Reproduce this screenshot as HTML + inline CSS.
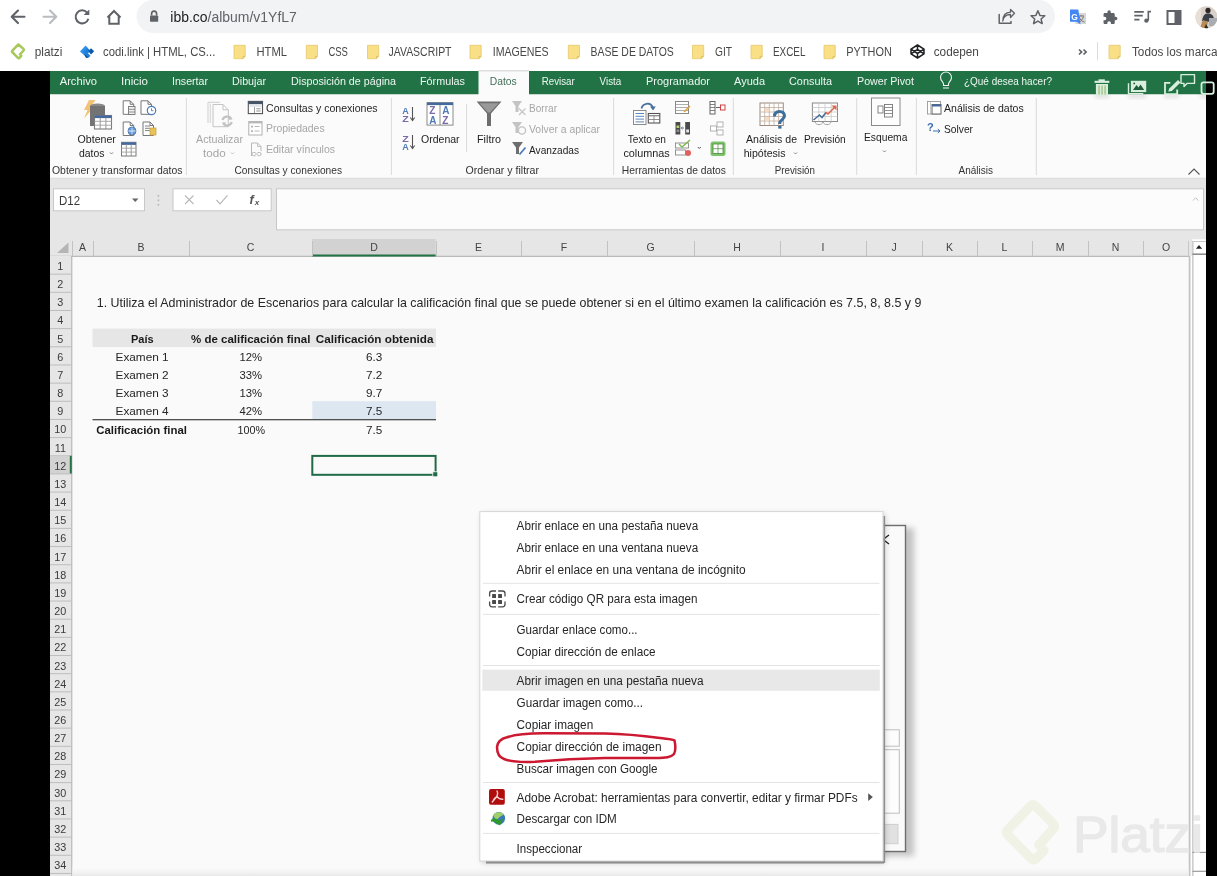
<!DOCTYPE html>
<html><head><meta charset="utf-8"><title>ibb</title>
<style>html,body{margin:0;padding:0;width:1217px;height:876px;overflow:hidden;background:#fff}
svg{display:block;will-change:transform} text{font-family:"Liberation Sans",sans-serif;white-space:pre}</style></head>
<body><svg width="1217" height="876" viewBox="0 0 1217 876">
<rect x="0" y="0" width="1217" height="36" fill="#ffffff" />
<rect x="136.5" y="0" width="918.5" height="33" fill="#f1f3f4" rx="16.5" />
<path d="M24.5 16.8 H12.5 M18 10.5 L11.7 16.8 L18 23.1" fill="none" stroke="#5f6368" stroke-width="2.1" stroke-linecap="round" stroke-linejoin="round"/>
<path d="M43.5 16.8 H55.5 M50 10.5 L56.3 16.8 L50 23.1" fill="none" stroke="#b9bcc0" stroke-width="2.1" stroke-linecap="round" stroke-linejoin="round"/>
<path d="M87.1 12.6 A6.5 6.5 0 1 0 88.4 18.7" fill="none" stroke="#5f6368" stroke-width="2" stroke-linecap="butt"/>
<path d="M89.3 9.4 L89.3 15 L83.6 15 Z" fill="#5f6368" />
<path d="M107.5 17.5 L114 11 L120.5 17.5 M109.3 16 V23.8 H118.7 V16" fill="none" stroke="#5f6368" stroke-width="2" stroke-linejoin="miter"/>
<path d="M151.6 15.5 V13.8 A2.5 2.7 0 0 1 156.6 13.8 V15.5" fill="none" stroke="#5f6368" stroke-width="1.6" />
<rect x="150" y="15.5" width="8.2" height="6.3" fill="#5f6368" rx="0.8" />
<text x="170.3" y="21.7" font-size="14" textLength="126.5" lengthAdjust="spacingAndGlyphs"><tspan fill="#202124">ibb.co</tspan><tspan fill="#5f6368">/album/v1YfL7</tspan></text>
<path d="M999.2 14.5 V23.3 H1011 V21.5" fill="none" stroke="#5f6368" stroke-width="1.5" stroke-linejoin="round" stroke-linecap="round"/>
<path d="M1002.8 21 C1003.5 16.5 1006.5 14.5 1010.5 14.5 V17.5 L1014.5 13.3 L1010.5 9.5 V12.2 C1005.5 12.5 1002.8 16 1002.8 21 Z" fill="none" stroke="#5f6368" stroke-width="1.3" stroke-linejoin="round"/>
<path d="M1037.9 10.8 L1039.9 15.4 L1044.8 15.8 L1041.1 19 L1042.2 23.6 L1037.9 21.1 L1033.6 23.6 L1034.7 19 L1031 15.8 L1035.9 15.4 Z" fill="none" stroke="#5f6368" stroke-width="1.5" stroke-linejoin="round"/>
<rect x="1075.5" y="13" width="10.5" height="11" fill="#d6d6d6" />
<path d="M1078 16 H1084 M1081 15 V16 M1079 16.5 C1080 20 1082 21.5 1084.5 22 M1083.5 16.5 C1082.5 19.5 1081 21.5 1078.5 22.5" fill="none" stroke="#6b6b6b" stroke-width="0.9" />
<path d="M1070 9.5 H1078.3 L1080.5 24.5 L1077 21.8 H1070 Z" fill="#4285f4" />
<text x="1071.3" y="19.5" font-size="8.5" fill="#ffffff" font-weight="700" >G</text>
<path d="M20.5 11H19V7c0-1.1-.9-2-2-2h-4V3.5C13 2.12 11.88 1 10.5 1S8 2.12 8 3.5V5H4c-1.1 0-1.99.9-1.99 2v3.8H3.5c1.49 0 2.7 1.21 2.7 2.7s-1.21 2.7-2.7 2.7H2V20c0 1.1.9 2 2 2h3.8v-1.5c0-1.49 1.21-2.7 2.7-2.7 1.49 0 2.7 1.21 2.7 2.7V22H17c1.1 0 2-.9 2-2v-4h1.5c1.38 0 2.5-1.12 2.5-2.5S21.88 11 20.5 11z" fill="#5f6368" transform="translate(1102.2,9.6) scale(0.66)"/>
<path d="M1134.3 11.8 H1143.8 M1134.3 15.6 H1142.8 M1134.3 19.6 H1139.5" fill="none" stroke="#5f6368" stroke-width="1.7" />
<path d="M1148.3 20.5 V11.6 H1151" fill="none" stroke="#5f6368" stroke-width="1.6" />
<ellipse cx="1146.4" cy="20.7" rx="2.2" ry="2.1" fill="#5f6368"/>
<rect x="1167.5" y="11" width="13" height="13" fill="none" stroke="#5f6368" stroke-width="2" />
<rect x="1174.5" y="11" width="6" height="13" fill="#5f6368" />
<clipPath id="av"><circle cx="1206.5" cy="17.2" r="11"/></clipPath>
<g clip-path="url(#av)"><rect x="1195" y="6" width="22" height="23" fill="#d8d2ca"/><rect x="1195" y="6" width="6" height="23" fill="#e8e0d6"/><ellipse cx="1208" cy="10.5" rx="2.6" ry="2.8" fill="#2e2622"/><path d="M1202 21 C1203 15 1205 13.5 1208 13.5 C1211 13.5 1213.5 15 1214 19 L1211 22 Z" fill="#3a3f46"/><path d="M1200 28 L1203 20 L1208 22 L1206 29 Z" fill="#b98a55"/><path d="M1209 18 H1217 V26 H1209 Z" fill="#a9adb2"/><path d="M1206 24 L1209 29 H1204 Z" fill="#2a2a2a"/></g>
<rect x="0" y="36" width="1217" height="35" fill="#ffffff" />
<path d="M20 54.3 L23.6 50.5 Q24.2 49.8 23.6 49.2 L19 44.8 Q18.4 44.2 17.8 44.8 L12.2 50.8 Q11.6 51.4 12.2 52 L18 58 Q18.6 58.6 19.2 58 L21.3 55.9" fill="none" stroke="#a6c95a" stroke-width="2.5" stroke-linejoin="round" stroke-linecap="round"/>
<text x="34.8" y="55.6" font-size="12" fill="#474747" textLength="27.5" lengthAdjust="spacingAndGlyphs" >platzi</text>
<path d="M85.5 45.8 L90.5 50.8 L88 53.3 L90.5 55.8 L88.8 57.5 L80.2 51.5 Z" fill="#1f80dc" />
<path d="M80.2 51.5 L85.5 45.8 L87.5 47.8 L83 51.8 L88.8 57.5 L86.5 57.5 Z" fill="#2f93ea" />
<path d="M91 48.2 L94.2 51.3 L91 54.4 L88.3 51.3 Z" fill="#0f5aa8" />
<path d="M84 53.5 L88.8 57.5 L86 58 Z" fill="#0d4f94" />
<text x="103" y="55.6" font-size="12" fill="#474747" textLength="112.3" lengthAdjust="spacingAndGlyphs" >codi.link | HTML, CS...</text>
<path d="M234 45.3 H245.2 V56.3 L243 58.7 H234 Z" fill="#f9df86" stroke="#e6c869" stroke-width="0.8" />
<path d="M245.2 56.3 H243 V58.7" fill="#e9cf77" stroke="#d9b95a" stroke-width="0.6" />
<text x="256.5" y="55.6" font-size="12" fill="#474747" textLength="30.5" lengthAdjust="spacingAndGlyphs" >HTML</text>
<path d="M306.3 45.3 H317.5 V56.3 L315.3 58.7 H306.3 Z" fill="#f9df86" stroke="#e6c869" stroke-width="0.8" />
<path d="M317.5 56.3 H315.3 V58.7" fill="#e9cf77" stroke="#d9b95a" stroke-width="0.6" />
<text x="328.4" y="55.6" font-size="12" fill="#474747" textLength="19.5" lengthAdjust="spacingAndGlyphs" >CSS</text>
<path d="M367.5 45.3 H378.7 V56.3 L376.5 58.7 H367.5 Z" fill="#f9df86" stroke="#e6c869" stroke-width="0.8" />
<path d="M378.7 56.3 H376.5 V58.7" fill="#e9cf77" stroke="#d9b95a" stroke-width="0.6" />
<text x="388.5" y="55.6" font-size="12" fill="#474747" textLength="63" lengthAdjust="spacingAndGlyphs" >JAVASCRIPT</text>
<path d="M470 45.3 H481.2 V56.3 L479 58.7 H470 Z" fill="#f9df86" stroke="#e6c869" stroke-width="0.8" />
<path d="M481.2 56.3 H479 V58.7" fill="#e9cf77" stroke="#d9b95a" stroke-width="0.6" />
<text x="492.7" y="55.6" font-size="12" fill="#474747" textLength="56" lengthAdjust="spacingAndGlyphs" >IMAGENES</text>
<path d="M568.3 45.3 H579.5 V56.3 L577.3 58.7 H568.3 Z" fill="#f9df86" stroke="#e6c869" stroke-width="0.8" />
<path d="M579.5 56.3 H577.3 V58.7" fill="#e9cf77" stroke="#d9b95a" stroke-width="0.6" />
<text x="590.6" y="55.6" font-size="12" fill="#474747" textLength="83.2" lengthAdjust="spacingAndGlyphs" >BASE DE DATOS</text>
<path d="M692.5 45.3 H703.7 V56.3 L701.5 58.7 H692.5 Z" fill="#f9df86" stroke="#e6c869" stroke-width="0.8" />
<path d="M703.7 56.3 H701.5 V58.7" fill="#e9cf77" stroke="#d9b95a" stroke-width="0.6" />
<text x="715" y="55.6" font-size="12" fill="#474747" textLength="17" lengthAdjust="spacingAndGlyphs" >GIT</text>
<path d="M751 45.3 H762.2 V56.3 L760 58.7 H751 Z" fill="#f9df86" stroke="#e6c869" stroke-width="0.8" />
<path d="M762.2 56.3 H760 V58.7" fill="#e9cf77" stroke="#d9b95a" stroke-width="0.6" />
<text x="773" y="55.6" font-size="12" fill="#474747" textLength="32.5" lengthAdjust="spacingAndGlyphs" >EXCEL</text>
<path d="M824 45.3 H835.2 V56.3 L833 58.7 H824 Z" fill="#f9df86" stroke="#e6c869" stroke-width="0.8" />
<path d="M835.2 56.3 H833 V58.7" fill="#e9cf77" stroke="#d9b95a" stroke-width="0.6" />
<text x="846.3" y="55.6" font-size="12" fill="#474747" textLength="45.5" lengthAdjust="spacingAndGlyphs" >PYTHON</text>
<path d="M917.5 45 L924 49.2 V53.8 L917.5 58 L911 53.8 V49.2 Z M911 49.2 L917.5 53.5 L924 49.2 M911 53.8 L917.5 49.5 L924 53.8 M917.5 45 V49.5 M917.5 53.5 V58" fill="none" stroke="#202124" stroke-width="1.5" stroke-linejoin="round"/>
<text x="933.7" y="55.6" font-size="12" fill="#474747" textLength="45.2" lengthAdjust="spacingAndGlyphs" >codepen</text>
<path d="M1079 49.5 L1081.6 52 L1079 54.5 M1083.5 49.5 L1086.1 52 L1083.5 54.5" fill="none" stroke="#5f6368" stroke-width="1.7" />
<line x1="1097.5" y1="42.3" x2="1097.5" y2="60.3" stroke="#dadce0" stroke-width="1" />
<path d="M1109 45.3 H1120.2 V56.3 L1118 58.7 H1109 Z" fill="#f9df86" stroke="#e6c869" stroke-width="0.8" />
<path d="M1120.2 56.3 H1118 V58.7" fill="#e9cf77" stroke="#d9b95a" stroke-width="0.6" />
<text x="1132" y="55.6" font-size="12" fill="#474747" textLength="85.5" lengthAdjust="spacingAndGlyphs" >Todos los marca</text>
<rect x="0" y="71" width="50" height="805" fill="#000000" />
<rect x="1206" y="71" width="11" height="805" fill="#000000" />
<rect x="50" y="71" width="1156" height="23.5" fill="#217346" />
<rect x="50" y="94.5" width="1156" height="84" fill="#fbfbfb" />
<rect x="478.5" y="71" width="50.5" height="24" fill="#fbfbfb" />
<line x1="50" y1="178.3" x2="1206" y2="178.3" stroke="#d6d6d6" stroke-width="1" />
<text x="59.7" y="84.8" font-size="11.5" fill="#eef7f1" textLength="37.3" lengthAdjust="spacingAndGlyphs" >Archivo</text>
<text x="121" y="84.8" font-size="11.5" fill="#eef7f1" textLength="27" lengthAdjust="spacingAndGlyphs" >Inicio</text>
<text x="172" y="84.8" font-size="11.5" fill="#eef7f1" textLength="36" lengthAdjust="spacingAndGlyphs" >Insertar</text>
<text x="232" y="84.8" font-size="11.5" fill="#eef7f1" textLength="34" lengthAdjust="spacingAndGlyphs" >Dibujar</text>
<text x="291" y="84.8" font-size="11.5" fill="#eef7f1" textLength="105" lengthAdjust="spacingAndGlyphs" >Disposición de página</text>
<text x="420" y="84.8" font-size="11.5" fill="#eef7f1" textLength="45" lengthAdjust="spacingAndGlyphs" >Fórmulas</text>
<text x="541.7" y="84.8" font-size="11.5" fill="#eef7f1" textLength="33" lengthAdjust="spacingAndGlyphs" >Revisar</text>
<text x="599.6" y="84.8" font-size="11.5" fill="#eef7f1" textLength="21.7" lengthAdjust="spacingAndGlyphs" >Vista</text>
<text x="646" y="84.8" font-size="11.5" fill="#eef7f1" textLength="64" lengthAdjust="spacingAndGlyphs" >Programador</text>
<text x="734" y="84.8" font-size="11.5" fill="#eef7f1" textLength="31" lengthAdjust="spacingAndGlyphs" >Ayuda</text>
<text x="789" y="84.8" font-size="11.5" fill="#eef7f1" textLength="43" lengthAdjust="spacingAndGlyphs" >Consulta</text>
<text x="857" y="84.8" font-size="11.5" fill="#eef7f1" textLength="57" lengthAdjust="spacingAndGlyphs" >Power Pivot</text>
<text x="964" y="84.8" font-size="11.5" fill="#eef7f1" textLength="88" lengthAdjust="spacingAndGlyphs" >¿Qué desea hacer?</text>
<text x="489.7" y="84.8" font-size="11.5" fill="#44705a" textLength="27" lengthAdjust="spacingAndGlyphs" >Datos</text>
<line x1="478.5" y1="70.8" x2="528.8" y2="70.8" stroke="#cfcfcf" stroke-width="1" />
<path d="M943 88 H949 M943.5 85.5 V84 C943.5 82 940.5 81 940.5 77.5 A5.5 5.5 0 0 1 951.5 77.5 C951.5 81 948.5 82 948.5 84 V85.5 Z" fill="none" stroke="#eef7f1" stroke-width="1.1" />
<line x1="186.4" y1="98" x2="186.4" y2="175" stroke="#dadada" stroke-width="1" />
<line x1="391.4" y1="98" x2="391.4" y2="175" stroke="#dadada" stroke-width="1" />
<line x1="466.6" y1="104" x2="466.6" y2="152" stroke="#dadada" stroke-width="1" />
<line x1="613.6" y1="98" x2="613.6" y2="175" stroke="#dadada" stroke-width="1" />
<line x1="733.3" y1="98" x2="733.3" y2="175" stroke="#dadada" stroke-width="1" />
<line x1="856.7" y1="98" x2="856.7" y2="175" stroke="#dadada" stroke-width="1" />
<line x1="916.4" y1="98" x2="916.4" y2="175" stroke="#dadada" stroke-width="1" />
<line x1="1036.3" y1="98" x2="1036.3" y2="175" stroke="#dadada" stroke-width="1" />
<text x="52" y="174.1" font-size="10.2" fill="#333333" textLength="130.5" lengthAdjust="spacingAndGlyphs" >Obtener y transformar datos</text>
<text x="234.5" y="174.1" font-size="10.2" fill="#333333" textLength="107.5" lengthAdjust="spacingAndGlyphs" >Consultas y conexiones</text>
<text x="465.6" y="174.1" font-size="10.2" fill="#333333" textLength="73.4" lengthAdjust="spacingAndGlyphs" >Ordenar y filtrar</text>
<text x="621.8" y="174.1" font-size="10.2" fill="#333333" textLength="104.2" lengthAdjust="spacingAndGlyphs" >Herramientas de datos</text>
<text x="774.7" y="174.1" font-size="10.2" fill="#333333" textLength="40.3" lengthAdjust="spacingAndGlyphs" >Previsión</text>
<text x="958.6" y="174.1" font-size="10.2" fill="#333333" textLength="34.4" lengthAdjust="spacingAndGlyphs" >Análisis</text>
<path d="M89 100 L95.5 100 L90.5 107.5 L93.5 107.5 L84 118.5 L87.5 110 L84 110 Z" fill="#f3c274" />
<ellipse cx="97.5" cy="106" rx="7.5" ry="2.6" fill="#8a8a8a"/>
<rect x="90" y="106" width="15" height="20" fill="#737373" />
<rect x="94.5" y="115.5" width="17" height="13.5" fill="#ffffff" stroke="#7a7a7a" stroke-width="1.1" />
<rect x="94.5" y="115.5" width="17" height="2.6" fill="#44699f" />
<line x1="100.2" y1="117.5" x2="100.2" y2="129" stroke="#8c8c8c" stroke-width="0.9" />
<line x1="105.9" y1="117.5" x2="105.9" y2="129" stroke="#8c8c8c" stroke-width="0.9" />
<line x1="94.5" y1="121.3" x2="111.5" y2="121.3" stroke="#a0a0a0" stroke-width="0.9" />
<line x1="94.5" y1="125.2" x2="111.5" y2="125.2" stroke="#a0a0a0" stroke-width="0.9" />
<text x="77.6" y="142.75" font-size="11.5" fill="#1e1e1e" textLength="38.3" lengthAdjust="spacingAndGlyphs" >Obtener</text>
<text x="79" y="156.6" font-size="11.5" fill="#1e1e1e" textLength="25.5" lengthAdjust="spacingAndGlyphs" >datos</text>
<path d="M110 152.4 L111.5 154 L113 152.4" fill="none" stroke="#777" stroke-width="0.9" />
<path d="M123.2 100.8 H130.2 L133.7 104.3 V114.3 H123.2 Z M130.2 100.8 V104.3 H133.7" fill="#ffffff" stroke="#777" stroke-width="1" />
<rect x="128.5" y="106.5" width="6.5" height="8" fill="#f0f0f0" stroke="#777" stroke-width="0.9" />
<line x1="128.5" y1="109.3" x2="135" y2="109.3" stroke="#777" stroke-width="0.8" />
<line x1="128.5" y1="112" x2="135" y2="112" stroke="#777" stroke-width="0.8" />
<path d="M141 100.8 H148.0 L151.5 104.3 V114.3 H141 Z M148.0 100.8 V104.3 H151.5" fill="#ffffff" stroke="#777" stroke-width="1" />
<circle cx="151.5" cy="110.5" r="4.2" fill="#ffffff" stroke="#4e7ab5" stroke-width="1.2"/>
<path d="M151.5 108.3 V110.7 H153.5" fill="none" stroke="#4e7ab5" stroke-width="0.9" />
<path d="M123.2 122 H130.2 L133.7 125.5 V135.5 H123.2 Z M130.2 122 V125.5 H133.7" fill="#ffffff" stroke="#777" stroke-width="1" />
<circle cx="132" cy="131" r="4" fill="#6b9bd7" stroke="#3f6fae" stroke-width="0.8"/>
<line x1="128.5" y1="131" x2="135.5" y2="131" stroke="#fff" stroke-width="0.8" />
<line x1="132" y1="127.5" x2="132" y2="134.5" stroke="#fff" stroke-width="0.6" />
<path d="M143 122 H150.0 L153.5 125.5 V135.5 H143 Z M150.0 122 V125.5 H153.5" fill="#ffffff" stroke="#777" stroke-width="1" />
<line x1="145" y1="126" x2="150" y2="126" stroke="#777" stroke-width="0.9" />
<line x1="145" y1="128.3" x2="150" y2="128.3" stroke="#777" stroke-width="0.9" />
<line x1="145" y1="130.6" x2="150" y2="130.6" stroke="#777" stroke-width="0.9" />
<rect x="150" y="128" width="6" height="7" fill="#e8c35a" stroke="#c9a23a" stroke-width="0.7" />
<rect x="121.5" y="142.3" width="14.5" height="13.7" fill="#ffffff" stroke="#7a7a7a" stroke-width="1" />
<rect x="121.5" y="142.3" width="14.5" height="2.6" fill="#44699f" />
<line x1="126.3" y1="144" x2="126.3" y2="156" stroke="#8c8c8c" stroke-width="0.9" />
<line x1="131.2" y1="144" x2="131.2" y2="156" stroke="#8c8c8c" stroke-width="0.9" />
<line x1="121.5" y1="148.2" x2="136" y2="148.2" stroke="#a0a0a0" stroke-width="0.9" />
<line x1="121.5" y1="152.1" x2="136" y2="152.1" stroke="#a0a0a0" stroke-width="0.9" />
<path d="M208 123 V102.3 H220" fill="none" stroke="#cfcfcf" stroke-width="1" />
<path d="M210.3 123 V103.8" fill="none" stroke="#d4d4d4" stroke-width="1" />
<path d="M213 104.5 H223 L228.3 109.8 V126.7 H213 Z M223 104.5 V109.8 H228.3" fill="#fbfbfb" stroke="#c4c4c4" stroke-width="1" />
<path d="M222.5 120 A4.8 4.8 0 0 1 231 118.5 M231.8 122 A4.8 4.8 0 0 1 223.3 123.5" fill="none" stroke="#c2c2c2" stroke-width="2.2" />
<path d="M230 115.8 L232.6 119.5 L228.5 119.8 Z M224.5 126.2 L221.8 122.6 L225.9 122.2 Z" fill="#c2c2c2" />
<text x="196" y="142.7" font-size="11.5" fill="#a6a6a6" textLength="47" lengthAdjust="spacingAndGlyphs" >Actualizar</text>
<text x="203" y="156.8" font-size="11.5" fill="#a6a6a6" textLength="22.6" lengthAdjust="spacingAndGlyphs" >todo</text>
<path d="M231 152.5 L232.5 154 L234 152.5" fill="none" stroke="#bbb" stroke-width="0.9" />
<rect x="248.3" y="101.4" width="14.2" height="12.2" fill="#ffffff" stroke="#555" stroke-width="1.1" />
<rect x="248.3" y="101.4" width="14.2" height="2.8" fill="#44546a" />
<rect x="249.3" y="104.5" width="12.2" height="2.5" fill="#e4e8ee" />
<line x1="254.5" y1="107" x2="254.5" y2="113" stroke="#888" stroke-width="0.8" />
<line x1="256.3" y1="108.8" x2="260.5" y2="108.8" stroke="#777" stroke-width="0.8" />
<line x1="256.3" y1="111" x2="260.5" y2="111" stroke="#777" stroke-width="0.8" />
<text x="266" y="111.8" font-size="11.5" fill="#1e1e1e" textLength="111.6" lengthAdjust="spacingAndGlyphs" >Consultas y conexiones</text>
<rect x="248.8" y="121.6" width="13.2" height="13.4" fill="#ffffff" stroke="#b0b0b0" stroke-width="1" />
<rect x="248.8" y="121.6" width="13.2" height="1.8" fill="#b8b8b8" />
<rect x="251" y="125.7" width="2" height="1.8" fill="#b5b5b5" />
<line x1="254.5" y1="126.5" x2="259.5" y2="126.5" stroke="#b0b0b0" stroke-width="0.9" />
<rect x="251" y="130.2" width="2" height="1.8" fill="#b5b5b5" />
<line x1="254.5" y1="131" x2="259.5" y2="131" stroke="#b0b0b0" stroke-width="0.9" />
<text x="266" y="132" font-size="11.5" fill="#a6a6a6" textLength="58.6" lengthAdjust="spacingAndGlyphs" >Propiedades</text>
<path d="M251.5 156 V143 H257.5 L261 146.5 V151" fill="none" stroke="#b8b8b8" stroke-width="1" />
<path d="M257.5 143 V146.5 H261" fill="none" stroke="#b8b8b8" stroke-width="0.8" />
<path d="M255.5 152.5 H253.5 A1.6 1.6 0 0 0 253.5 155.7 H255.5 M257.5 152.5 H259.5 A1.6 1.6 0 0 1 259.5 155.7 H257.5 M255 154.1 H258" fill="none" stroke="#b0b0b0" stroke-width="0.9" />
<text x="266" y="153" font-size="11.5" fill="#a6a6a6" textLength="69" lengthAdjust="spacingAndGlyphs" >Editar vínculos</text>
<text x="402.3" y="114" font-size="8.5" fill="#4e7ab5" font-weight="700" textLength="6.5" lengthAdjust="spacingAndGlyphs" >A</text>
<text x="402.3" y="121.8" font-size="8.5" fill="#7a6ba8" font-weight="700" textLength="6.5" lengthAdjust="spacingAndGlyphs" >Z</text>
<path d="M412.5 107 V120 M410.3 117.5 L412.5 120.5 L414.7 117.5" fill="none" stroke="#555" stroke-width="1.1" />
<text x="402.3" y="141.8" font-size="8.5" fill="#7a6ba8" font-weight="700" textLength="6.5" lengthAdjust="spacingAndGlyphs" >Z</text>
<text x="402.3" y="149.8" font-size="8.5" fill="#4e7ab5" font-weight="700" textLength="6.5" lengthAdjust="spacingAndGlyphs" >A</text>
<path d="M412.5 135 V148 M410.3 145.5 L412.5 148.5 L414.7 145.5" fill="none" stroke="#555" stroke-width="1.1" />
<rect x="427" y="102.6" width="26" height="22.5" fill="#ffffff" stroke="#8a8a8a" stroke-width="1" />
<rect x="427" y="102.6" width="26" height="2.5" fill="#44699f" />
<line x1="440" y1="105" x2="440" y2="125" stroke="#8a8a8a" stroke-width="1" />
<text x="429.3" y="114" font-size="10" fill="#7a6ba8" font-weight="700" >Z</text>
<text x="442.3" y="114" font-size="10" fill="#4e7ab5" font-weight="700" >A</text>
<text x="429.3" y="124.3" font-size="10" fill="#4e7ab5" font-weight="700" >A</text>
<text x="442.3" y="124.3" font-size="10" fill="#7a6ba8" font-weight="700" >Z</text>
<text x="421" y="142.6" font-size="11.5" fill="#1e1e1e" textLength="38.6" lengthAdjust="spacingAndGlyphs" >Ordenar</text>
<path d="M476.6 101.6 H501.5 L491 113.5 V126 H487 V113.5 Z" fill="#6e6e6e" />
<path d="M479.5 103.3 H498.6 L490 112.5 H488 Z" fill="#9a9a9a" />
<text x="477" y="142.6" font-size="11.5" fill="#1e1e1e" textLength="24" lengthAdjust="spacingAndGlyphs" >Filtro</text>
<path d="M512 101 H522 L518.5 106 V112 H515.5 V106 Z" fill="#c4c4c4" />
<path d="M519 108.5 L525.5 115 M525.5 108.5 L519 115" fill="none" stroke="#c4c4c4" stroke-width="1.2" />
<text x="529" y="112" font-size="11.5" fill="#a6a6a6" textLength="28" lengthAdjust="spacingAndGlyphs" >Borrar</text>
<path d="M512 122 H522 L518.5 127 V133 H515.5 V127 Z" fill="#c4c4c4" />
<circle cx="522" cy="130.5" r="3.6" fill="none" stroke="#c4c4c4" stroke-width="1.4"/>
<text x="529" y="132.8" font-size="11.5" fill="#a6a6a6" textLength="71" lengthAdjust="spacingAndGlyphs" >Volver a aplicar</text>
<path d="M512 142 H523 L519 147.5 V154 H516 V147.5 Z" fill="#6e6e6e" />
<path d="M519.5 154.5 L525.5 147.5" fill="none" stroke="#4e7ab5" stroke-width="1.8" />
<text x="529" y="153.6" font-size="11.5" fill="#1e1e1e" textLength="50" lengthAdjust="spacingAndGlyphs" >Avanzadas</text>
<path d="M641.5 108.5 C642.5 103.5 650 101.5 652.8 107" fill="none" stroke="#4a6f9c" stroke-width="1.7" />
<path d="M650 106.5 L653 110.5 L655.8 106.5 Z" fill="#4a6f9c" />
<rect x="633.5" y="110.5" width="12.5" height="14" fill="#ffffff" stroke="#8a8a8a" stroke-width="1" />
<line x1="635.5" y1="113.5" x2="644" y2="113.5" stroke="#5b87bb" stroke-width="1" />
<line x1="635.5" y1="116.3" x2="644" y2="116.3" stroke="#5b87bb" stroke-width="1" />
<line x1="635.5" y1="119.1" x2="644" y2="119.1" stroke="#5b87bb" stroke-width="1" />
<line x1="635.5" y1="121.9" x2="644" y2="121.9" stroke="#5b87bb" stroke-width="1" />
<rect x="648.3" y="113.5" width="11.5" height="9.5" fill="#ffffff" stroke="#555" stroke-width="1.1" />
<line x1="648.3" y1="115.8" x2="659.8" y2="115.8" stroke="#555" stroke-width="0.9" />
<line x1="654" y1="115.8" x2="654" y2="123" stroke="#777" stroke-width="0.8" />
<line x1="648.3" y1="119.5" x2="659.8" y2="119.5" stroke="#777" stroke-width="0.8" />
<text x="627.7" y="143" font-size="11.5" fill="#1e1e1e" textLength="38.3" lengthAdjust="spacingAndGlyphs" >Texto en</text>
<text x="623.4" y="157" font-size="11.5" fill="#1e1e1e" textLength="46.4" lengthAdjust="spacingAndGlyphs" >columnas</text>
<rect x="675.5" y="101.5" width="13" height="12" fill="#ffffff" stroke="#888" stroke-width="1" />
<line x1="675.5" y1="104.5" x2="688.5" y2="104.5" stroke="#999" stroke-width="0.8" />
<line x1="675.5" y1="107.5" x2="688.5" y2="107.5" stroke="#999" stroke-width="0.8" />
<line x1="675.5" y1="110.5" x2="688.5" y2="110.5" stroke="#999" stroke-width="0.8" />
<path d="M684 112 L690 106" fill="none" stroke="#e0a030" stroke-width="1.5" />
<rect x="675.5" y="122" width="4.8" height="12.5" fill="#4a4a4a" />
<rect x="685.2" y="122" width="4.8" height="12.5" fill="#4a4a4a" />
<rect x="676.5" y="125.5" width="2.8" height="2.5" fill="#b8d070" />
<rect x="676.5" y="129.5" width="2.8" height="2.5" fill="#8a8a8a" />
<rect x="686.2" y="129.5" width="2.8" height="3" fill="#e8e8e8" />
<path d="M684 128 H681.3 M682.5 126.8 L681.2 128 L682.5 129.2" fill="none" stroke="#4a6f9c" stroke-width="0.9" />
<rect x="675.5" y="143" width="13" height="5" fill="#ffffff" stroke="#888" stroke-width="0.9" />
<rect x="675.5" y="150" width="10" height="5" fill="#ffffff" stroke="#888" stroke-width="0.9" />
<path d="M679 144 L682 147 L690 140" fill="none" stroke="#7ab648" stroke-width="1.3" />
<circle cx="688" cy="153" r="3" fill="#e06060"/>
<path d="M697.8 147 L699.3 148.5 L700.8 147" fill="none" stroke="#555" stroke-width="1" />
<rect x="710" y="101.5" width="5" height="12.5" fill="#ffffff" stroke="#666" stroke-width="1" />
<line x1="710" y1="104.5" x2="715" y2="104.5" stroke="#666" stroke-width="0.8" />
<line x1="710" y1="107.5" x2="715" y2="107.5" stroke="#666" stroke-width="0.8" />
<line x1="710" y1="110.5" x2="715" y2="110.5" stroke="#666" stroke-width="0.8" />
<path d="M716 107.5 H720" fill="none" stroke="#666" stroke-width="1" />
<rect x="720.5" y="105" width="4.5" height="5" fill="#ffffff" stroke="#d04040" stroke-width="1" />
<rect x="717" y="122" width="6" height="5" fill="#ffffff" stroke="#aaa" stroke-width="0.9" />
<rect x="710.5" y="126" width="6" height="5" fill="#ffffff" stroke="#aaa" stroke-width="0.9" />
<rect x="717" y="130" width="6" height="5" fill="#ffffff" stroke="#aaa" stroke-width="0.9" />
<rect x="710.5" y="141.5" width="15" height="14.5" fill="#7cc46a" rx="2.5" />
<rect x="713" y="144" width="10" height="9.5" fill="#ffffff" stroke="#4a8a3a" stroke-width="0.8" />
<line x1="718" y1="144" x2="718" y2="153.5" stroke="#4a8a3a" stroke-width="0.7" />
<line x1="713" y1="148.7" x2="723" y2="148.7" stroke="#4a8a3a" stroke-width="0.7" />
<rect x="760" y="103" width="23.3" height="22.5" fill="#ffffff" stroke="#9a8a80" stroke-width="1" />
<line x1="764.7" y1="103" x2="764.7" y2="125.5" stroke="#c0aca0" stroke-width="0.8" />
<line x1="769.3" y1="103" x2="769.3" y2="125.5" stroke="#c0aca0" stroke-width="0.8" />
<line x1="774" y1="103" x2="774" y2="125.5" stroke="#c0aca0" stroke-width="0.8" />
<line x1="778.6" y1="103" x2="778.6" y2="125.5" stroke="#c0aca0" stroke-width="0.8" />
<line x1="760" y1="107.5" x2="783.3" y2="107.5" stroke="#c0aca0" stroke-width="0.8" />
<line x1="760" y1="112" x2="783.3" y2="112" stroke="#c0aca0" stroke-width="0.8" />
<line x1="760" y1="116.5" x2="783.3" y2="116.5" stroke="#c0aca0" stroke-width="0.8" />
<line x1="760" y1="121" x2="783.3" y2="121" stroke="#c0aca0" stroke-width="0.8" />
<rect x="765" y="108" width="4" height="4" fill="#f8dcc0" />
<rect x="765" y="117" width="4" height="4" fill="#f8dcc0" />
<path d="M774.5 116.5 C774.5 112.5 777 111.5 779.5 111.5 C782.5 111.5 784.5 113.3 784.5 116 C784.5 119 780.5 119.8 779.8 122.5 V124" fill="none" stroke="#3c6e9c" stroke-width="3" />
<rect x="778.2" y="125.8" width="3.3" height="2.8" fill="#3c6e9c" />
<text x="746" y="143" font-size="11.5" fill="#1e1e1e" textLength="51" lengthAdjust="spacingAndGlyphs" >Análisis de</text>
<text x="743.7" y="157" font-size="11.5" fill="#1e1e1e" textLength="41.8" lengthAdjust="spacingAndGlyphs" >hipótesis</text>
<path d="M794 152.5 L795.5 154 L797 152.5" fill="none" stroke="#777" stroke-width="0.9" />
<rect x="812.4" y="103" width="25.1" height="18.5" fill="#ffffff" stroke="#8a8a8a" stroke-width="1" />
<line x1="818.8" y1="103" x2="818.8" y2="121.5" stroke="#c8c8c8" stroke-width="0.8" />
<line x1="825" y1="103" x2="825" y2="121.5" stroke="#c8c8c8" stroke-width="0.8" />
<line x1="831.2" y1="103" x2="831.2" y2="121.5" stroke="#c8c8c8" stroke-width="0.8" />
<line x1="812.4" y1="107.5" x2="837.5" y2="107.5" stroke="#c8c8c8" stroke-width="0.8" />
<line x1="812.4" y1="112" x2="837.5" y2="112" stroke="#c8c8c8" stroke-width="0.8" />
<line x1="812.4" y1="116.5" x2="837.5" y2="116.5" stroke="#c8c8c8" stroke-width="0.8" />
<path d="M813.5 120 L819.5 115 L822 117.5 L826 112.5" fill="none" stroke="#4a6f9c" stroke-width="1.6" />
<path d="M826 112.5 L828 114 L835.5 106.5" fill="none" stroke="#d86a50" stroke-width="1.6" />
<path d="M831.5 105.5 H836.5 V110.5 Z" fill="#d86a50" />
<path d="M815 122 C816 125.5 822 125.5 823 122 C824 125.5 830 125.5 831 122" fill="none" stroke="#9a9a9a" stroke-width="0.9" />
<text x="804" y="143" font-size="11.5" fill="#1e1e1e" textLength="41.7" lengthAdjust="spacingAndGlyphs" >Previsión</text>
<rect x="871.5" y="98" width="28.5" height="27.5" fill="#fdfdfd" stroke="#8a8a8a" stroke-width="1" />
<rect x="878" y="106" width="5" height="7" fill="#ffffff" stroke="#777" stroke-width="0.9" />
<rect x="884.5" y="104.5" width="8" height="12.5" fill="#ffffff" stroke="#777" stroke-width="0.9" />
<line x1="884.5" y1="107.5" x2="892.5" y2="107.5" stroke="#777" stroke-width="0.8" />
<line x1="884.5" y1="110.5" x2="892.5" y2="110.5" stroke="#777" stroke-width="0.8" />
<line x1="884.5" y1="113.5" x2="892.5" y2="113.5" stroke="#777" stroke-width="0.8" />
<text x="864" y="141" font-size="11.5" fill="#1e1e1e" textLength="43.4" lengthAdjust="spacingAndGlyphs" >Esquema</text>
<path d="M883 150.5 L884.5 152 L886 150.5" fill="none" stroke="#777" stroke-width="0.9" />
<rect x="927.5" y="101.5" width="13" height="12.5" fill="#ffffff" stroke="#999" stroke-width="0.9" />
<rect x="932" y="104.5" width="9" height="9.5" fill="#ffffff" stroke="#666" stroke-width="1" />
<rect x="932" y="104.5" width="9" height="2" fill="#44699f" />
<line x1="930.5" y1="101.5" x2="930.5" y2="114" stroke="#bbb" stroke-width="0.8" />
<text x="944" y="112" font-size="11.5" fill="#1e1e1e" textLength="79.7" lengthAdjust="spacingAndGlyphs" >Análisis de datos</text>
<text x="927" y="131" font-size="11" fill="#3c6eb0" font-weight="700" >?</text>
<path d="M933 131 H940 M937.8 129 L940 131 L937.8 133" fill="none" stroke="#3c6eb0" stroke-width="1" />
<text x="944" y="133" font-size="11.5" fill="#1e1e1e" textLength="29" lengthAdjust="spacingAndGlyphs" >Solver</text>
<path d="M1188.5 174.5 L1194 169 L1199.5 174.5" fill="none" stroke="#555" stroke-width="1.1" />
<defs><filter id="ish" x="-50%" y="-50%" width="200%" height="200%"><feGaussianBlur stdDeviation="2"/></filter></defs>
<rect x="1095" y="94" width="14" height="4" fill="#000" opacity="0.12" filter="url(#ish)"/>
<rect x="1128" y="94" width="18" height="4" fill="#000" opacity="0.12" filter="url(#ish)"/>
<rect x="1164" y="94" width="15" height="4" fill="#000" opacity="0.12" filter="url(#ish)"/>
<rect x="1200" y="94" width="14" height="4" fill="#000" opacity="0.12" filter="url(#ish)"/>
<rect x="1094.6" y="80.8" width="14.7" height="2.1" fill="#d9eedd" />
<rect x="1098.5" y="79.3" width="6.3" height="2" fill="#d9eedd" />
<rect x="1095.9" y="84" width="12.1" height="11.8" fill="#d9eedd" />
<rect x="1098.3" y="85.5" width="1.5" height="9" fill="#a9c48e" />
<rect x="1101.3" y="85.5" width="1.5" height="9" fill="#a9c48e" />
<rect x="1104.3" y="85.5" width="1.5" height="9" fill="#a9c48e" />
<path d="M1128.5 83.2 V93.8 H1143.3" fill="none" stroke="#d9eedd" stroke-width="1.4" />
<rect x="1130.9" y="80.8" width="15.3" height="11.3" fill="#d9eedd" />
<path d="M1133 90 L1136.5 85 L1138.5 87.5 L1140.5 84.5 L1144.2 90 Z" fill="#1f5e3a" />
<circle cx="1134.2" cy="83.4" r="0.9" fill="#1f5e3a"/>
<path d="M1170.3 82.8 H1165 V94.2 H1177.2 V89.4" fill="none" stroke="#d9eedd" stroke-width="1.8" />
<path d="M1168.2 91.6 L1169.3 88.5 L1178 80 L1180.5 82.5 L1171.8 91 Z" fill="#d9eedd" />
<path d="M1181 74.6 H1194.5 V83.4 H1187 L1184 86.5 V83.4 H1181 Z" fill="none" stroke="#d9eedd" stroke-width="1.4" stroke-linejoin="round"/>
<rect x="1201.5" y="82.3" width="12.2" height="11.5" fill="none" stroke="#d9eedd" stroke-width="1.8" rx="2" />
<rect x="50" y="178.8" width="1156" height="60.5" fill="#e6e6e6" />
<rect x="53.5" y="188.8" width="91" height="22" fill="#ffffff" stroke="#c8c8c8" stroke-width="1" />
<text x="59" y="204.5" font-size="12" fill="#3a3a3a" textLength="21" lengthAdjust="spacingAndGlyphs" >D12</text>
<path d="M132 198.5 H138.5 L135.25 202 Z" fill="#666" />
<rect x="157.6" y="195" width="1.6" height="1.6" fill="#b5b5b5" />
<rect x="157.6" y="199.5" width="1.6" height="1.6" fill="#b5b5b5" />
<rect x="157.6" y="204" width="1.6" height="1.6" fill="#b5b5b5" />
<rect x="173" y="188.8" width="98.2" height="22" fill="#ffffff" stroke="#c8c8c8" stroke-width="1" />
<path d="M185 195.5 L193.5 204 M193.5 195.5 L185 204" fill="none" stroke="#b8b8b8" stroke-width="1.1" />
<path d="M216.5 200 L220 203.8 L227.5 195.3" fill="none" stroke="#b8b8b8" stroke-width="1.2" />
<text x="249.5" y="204" font-size="12.5" fill="#555" font-family="Liberation Serif" font-style="italic" font-weight="700">f</text>
<text x="254.8" y="205" font-size="8" fill="#555" font-family="Liberation Serif" font-style="italic" font-weight="700">x</text>
<rect x="276.5" y="188.8" width="927" height="41" fill="#fcfcfc" stroke="#c8c8c8" stroke-width="1" />
<path d="M1193 200.5 L1195.7 197.8 L1198.4 200.5" fill="none" stroke="#c0c0c0" stroke-width="1" />
<rect x="72" y="256" width="1117" height="620" fill="#fafafa" />
<rect x="50" y="239" width="1142" height="17" fill="#e6e6e6" />
<line x1="50" y1="256.3" x2="1189" y2="256.3" stroke="#ababab" stroke-width="1" />
<rect x="312.3" y="239" width="123.3" height="17" fill="#d2d2d2" />
<line x1="312.3" y1="255.5" x2="435.6" y2="255.5" stroke="#217346" stroke-width="2" />
<line x1="72.5" y1="241" x2="72.5" y2="256" stroke="#c2c2c2" stroke-width="1" />
<text x="82.5" y="251.2" font-size="10.5" fill="#444444" text-anchor="middle" >A</text>
<line x1="93.5" y1="241" x2="93.5" y2="256" stroke="#c2c2c2" stroke-width="1" />
<text x="141.0" y="251.2" font-size="10.5" fill="#444444" text-anchor="middle" >B</text>
<line x1="189.5" y1="241" x2="189.5" y2="256" stroke="#c2c2c2" stroke-width="1" />
<text x="250.5" y="251.2" font-size="10.5" fill="#444444" text-anchor="middle" >C</text>
<line x1="312.5" y1="241" x2="312.5" y2="256" stroke="#c2c2c2" stroke-width="1" />
<text x="374.0" y="251.2" font-size="10.5" fill="#444444" text-anchor="middle" >D</text>
<line x1="436.5" y1="241" x2="436.5" y2="256" stroke="#c2c2c2" stroke-width="1" />
<text x="478.5" y="251.2" font-size="10.5" fill="#444444" text-anchor="middle" >E</text>
<line x1="521.5" y1="241" x2="521.5" y2="256" stroke="#c2c2c2" stroke-width="1" />
<text x="564.0" y="251.2" font-size="10.5" fill="#444444" text-anchor="middle" >F</text>
<line x1="607.5" y1="241" x2="607.5" y2="256" stroke="#c2c2c2" stroke-width="1" />
<text x="650.5" y="251.2" font-size="10.5" fill="#444444" text-anchor="middle" >G</text>
<line x1="694.5" y1="241" x2="694.5" y2="256" stroke="#c2c2c2" stroke-width="1" />
<text x="737.0" y="251.2" font-size="10.5" fill="#444444" text-anchor="middle" >H</text>
<line x1="780.5" y1="241" x2="780.5" y2="256" stroke="#c2c2c2" stroke-width="1" />
<text x="823.0" y="251.2" font-size="10.5" fill="#444444" text-anchor="middle" >I</text>
<line x1="866.5" y1="241" x2="866.5" y2="256" stroke="#c2c2c2" stroke-width="1" />
<text x="894.0" y="251.2" font-size="10.5" fill="#444444" text-anchor="middle" >J</text>
<line x1="922.5" y1="241" x2="922.5" y2="256" stroke="#c2c2c2" stroke-width="1" />
<text x="949.5" y="251.2" font-size="10.5" fill="#444444" text-anchor="middle" >K</text>
<line x1="977.5" y1="241" x2="977.5" y2="256" stroke="#c2c2c2" stroke-width="1" />
<text x="1004.5" y="251.2" font-size="10.5" fill="#444444" text-anchor="middle" >L</text>
<line x1="1032.5" y1="241" x2="1032.5" y2="256" stroke="#c2c2c2" stroke-width="1" />
<text x="1060.0" y="251.2" font-size="10.5" fill="#444444" text-anchor="middle" >M</text>
<line x1="1088.5" y1="241" x2="1088.5" y2="256" stroke="#c2c2c2" stroke-width="1" />
<text x="1115.5" y="251.2" font-size="10.5" fill="#444444" text-anchor="middle" >N</text>
<line x1="1143.5" y1="241" x2="1143.5" y2="256" stroke="#c2c2c2" stroke-width="1" />
<text x="1166.0" y="251.2" font-size="10.5" fill="#444444" text-anchor="middle" >O</text>
<line x1="1188.5" y1="241" x2="1188.5" y2="256" stroke="#c6c6c6" stroke-width="1" />
<path d="M57 253 L68.5 253 L68.5 242.5 Z" fill="#b5b5b5" />
<rect x="50" y="256" width="21.5" height="620" fill="#e6e6e6" />
<line x1="71.8" y1="256" x2="71.8" y2="876" stroke="#ababab" stroke-width="1" />
<line x1="50" y1="274.16" x2="71.5" y2="274.16" stroke="#bdbdbd" stroke-width="1" />
<text x="60.3" y="270.0" font-size="10.8" fill="#3a3a3a" text-anchor="middle" >1</text>
<line x1="50" y1="292.32000000000005" x2="71.5" y2="292.32000000000005" stroke="#bdbdbd" stroke-width="1" />
<text x="60.3" y="288.16" font-size="10.8" fill="#3a3a3a" text-anchor="middle" >2</text>
<line x1="50" y1="310.48" x2="71.5" y2="310.48" stroke="#bdbdbd" stroke-width="1" />
<text x="60.3" y="306.32" font-size="10.8" fill="#3a3a3a" text-anchor="middle" >3</text>
<line x1="50" y1="328.64000000000004" x2="71.5" y2="328.64000000000004" stroke="#bdbdbd" stroke-width="1" />
<text x="60.3" y="324.48" font-size="10.8" fill="#3a3a3a" text-anchor="middle" >4</text>
<line x1="50" y1="346.8" x2="71.5" y2="346.8" stroke="#bdbdbd" stroke-width="1" />
<text x="60.3" y="342.64" font-size="10.8" fill="#3a3a3a" text-anchor="middle" >5</text>
<line x1="50" y1="364.96000000000004" x2="71.5" y2="364.96000000000004" stroke="#bdbdbd" stroke-width="1" />
<text x="60.3" y="360.8" font-size="10.8" fill="#3a3a3a" text-anchor="middle" >6</text>
<line x1="50" y1="383.12000000000006" x2="71.5" y2="383.12000000000006" stroke="#bdbdbd" stroke-width="1" />
<text x="60.3" y="378.96000000000004" font-size="10.8" fill="#3a3a3a" text-anchor="middle" >7</text>
<line x1="50" y1="401.28000000000003" x2="71.5" y2="401.28000000000003" stroke="#bdbdbd" stroke-width="1" />
<text x="60.3" y="397.12" font-size="10.8" fill="#3a3a3a" text-anchor="middle" >8</text>
<line x1="50" y1="419.44" x2="71.5" y2="419.44" stroke="#bdbdbd" stroke-width="1" />
<text x="60.3" y="415.28" font-size="10.8" fill="#3a3a3a" text-anchor="middle" >9</text>
<line x1="50" y1="437.6" x2="71.5" y2="437.6" stroke="#bdbdbd" stroke-width="1" />
<text x="60.3" y="433.44" font-size="10.8" fill="#3a3a3a" text-anchor="middle" >10</text>
<line x1="50" y1="455.76000000000005" x2="71.5" y2="455.76000000000005" stroke="#bdbdbd" stroke-width="1" />
<text x="60.3" y="451.6" font-size="10.8" fill="#3a3a3a" text-anchor="middle" >11</text>
<rect x="50" y="455.76" width="21.5" height="18.16" fill="#d2d2d2" />
<line x1="70.8" y1="455.76" x2="70.8" y2="473.92" stroke="#217346" stroke-width="2" />
<line x1="50" y1="473.92" x2="71.5" y2="473.92" stroke="#bdbdbd" stroke-width="1" />
<text x="60.3" y="469.76" font-size="10.8" fill="#3a3a3a" text-anchor="middle" >12</text>
<line x1="50" y1="492.08000000000004" x2="71.5" y2="492.08000000000004" stroke="#bdbdbd" stroke-width="1" />
<text x="60.3" y="487.92" font-size="10.8" fill="#3a3a3a" text-anchor="middle" >13</text>
<line x1="50" y1="510.24000000000007" x2="71.5" y2="510.24000000000007" stroke="#bdbdbd" stroke-width="1" />
<text x="60.3" y="506.08000000000004" font-size="10.8" fill="#3a3a3a" text-anchor="middle" >14</text>
<line x1="50" y1="528.4" x2="71.5" y2="528.4" stroke="#bdbdbd" stroke-width="1" />
<text x="60.3" y="524.24" font-size="10.8" fill="#3a3a3a" text-anchor="middle" >15</text>
<line x1="50" y1="546.56" x2="71.5" y2="546.56" stroke="#bdbdbd" stroke-width="1" />
<text x="60.3" y="542.4" font-size="10.8" fill="#3a3a3a" text-anchor="middle" >16</text>
<line x1="50" y1="564.7199999999999" x2="71.5" y2="564.7199999999999" stroke="#bdbdbd" stroke-width="1" />
<text x="60.3" y="560.56" font-size="10.8" fill="#3a3a3a" text-anchor="middle" >17</text>
<line x1="50" y1="582.88" x2="71.5" y2="582.88" stroke="#bdbdbd" stroke-width="1" />
<text x="60.3" y="578.72" font-size="10.8" fill="#3a3a3a" text-anchor="middle" >18</text>
<line x1="50" y1="601.04" x2="71.5" y2="601.04" stroke="#bdbdbd" stroke-width="1" />
<text x="60.3" y="596.88" font-size="10.8" fill="#3a3a3a" text-anchor="middle" >19</text>
<line x1="50" y1="619.1999999999999" x2="71.5" y2="619.1999999999999" stroke="#bdbdbd" stroke-width="1" />
<text x="60.3" y="615.04" font-size="10.8" fill="#3a3a3a" text-anchor="middle" >20</text>
<line x1="50" y1="637.36" x2="71.5" y2="637.36" stroke="#bdbdbd" stroke-width="1" />
<text x="60.3" y="633.2" font-size="10.8" fill="#3a3a3a" text-anchor="middle" >21</text>
<line x1="50" y1="655.52" x2="71.5" y2="655.52" stroke="#bdbdbd" stroke-width="1" />
<text x="60.3" y="651.36" font-size="10.8" fill="#3a3a3a" text-anchor="middle" >22</text>
<line x1="50" y1="673.68" x2="71.5" y2="673.68" stroke="#bdbdbd" stroke-width="1" />
<text x="60.3" y="669.52" font-size="10.8" fill="#3a3a3a" text-anchor="middle" >23</text>
<line x1="50" y1="691.84" x2="71.5" y2="691.84" stroke="#bdbdbd" stroke-width="1" />
<text x="60.3" y="687.6800000000001" font-size="10.8" fill="#3a3a3a" text-anchor="middle" >24</text>
<line x1="50" y1="710.0" x2="71.5" y2="710.0" stroke="#bdbdbd" stroke-width="1" />
<text x="60.3" y="705.84" font-size="10.8" fill="#3a3a3a" text-anchor="middle" >25</text>
<line x1="50" y1="728.16" x2="71.5" y2="728.16" stroke="#bdbdbd" stroke-width="1" />
<text x="60.3" y="724.0" font-size="10.8" fill="#3a3a3a" text-anchor="middle" >26</text>
<line x1="50" y1="746.32" x2="71.5" y2="746.32" stroke="#bdbdbd" stroke-width="1" />
<text x="60.3" y="742.1600000000001" font-size="10.8" fill="#3a3a3a" text-anchor="middle" >27</text>
<line x1="50" y1="764.4799999999999" x2="71.5" y2="764.4799999999999" stroke="#bdbdbd" stroke-width="1" />
<text x="60.3" y="760.3199999999999" font-size="10.8" fill="#3a3a3a" text-anchor="middle" >28</text>
<line x1="50" y1="782.64" x2="71.5" y2="782.64" stroke="#bdbdbd" stroke-width="1" />
<text x="60.3" y="778.48" font-size="10.8" fill="#3a3a3a" text-anchor="middle" >29</text>
<line x1="50" y1="800.8" x2="71.5" y2="800.8" stroke="#bdbdbd" stroke-width="1" />
<text x="60.3" y="796.64" font-size="10.8" fill="#3a3a3a" text-anchor="middle" >30</text>
<line x1="50" y1="818.9599999999999" x2="71.5" y2="818.9599999999999" stroke="#bdbdbd" stroke-width="1" />
<text x="60.3" y="814.8" font-size="10.8" fill="#3a3a3a" text-anchor="middle" >31</text>
<line x1="50" y1="837.12" x2="71.5" y2="837.12" stroke="#bdbdbd" stroke-width="1" />
<text x="60.3" y="832.96" font-size="10.8" fill="#3a3a3a" text-anchor="middle" >32</text>
<line x1="50" y1="855.28" x2="71.5" y2="855.28" stroke="#bdbdbd" stroke-width="1" />
<text x="60.3" y="851.12" font-size="10.8" fill="#3a3a3a" text-anchor="middle" >33</text>
<line x1="50" y1="873.4399999999999" x2="71.5" y2="873.4399999999999" stroke="#bdbdbd" stroke-width="1" />
<text x="60.3" y="869.28" font-size="10.8" fill="#3a3a3a" text-anchor="middle" >34</text>
<line x1="50" y1="891.6" x2="71.5" y2="891.6" stroke="#bdbdbd" stroke-width="1" />
<text x="60.3" y="887.44" font-size="10.8" fill="#3a3a3a" text-anchor="middle" >35</text>
<rect x="1189" y="239" width="3.4" height="17" fill="#e6e6e6" />
<line x1="1189.6" y1="256" x2="1189.6" y2="876" stroke="#c4c4c4" stroke-width="1.8" />
<rect x="1192.4" y="241" width="13.6" height="635" fill="#ffffff" />
<line x1="1192.9" y1="241" x2="1192.9" y2="876" stroke="#b0b0b0" stroke-width="1" />
<line x1="1192.4" y1="241.5" x2="1206" y2="241.5" stroke="#c8c8c8" stroke-width="1" />
<line x1="1192.4" y1="254.2" x2="1206" y2="254.2" stroke="#8e8e8e" stroke-width="1.6" />
<line x1="1192.4" y1="852.4" x2="1206" y2="852.4" stroke="#9a9a9a" stroke-width="1.2" />
<line x1="1192.4" y1="871.3" x2="1206" y2="871.3" stroke="#9a9a9a" stroke-width="1.2" />
<path d="M1195.9 248.8 H1202.1 L1199 245.1 Z" fill="#222" />
<text x="96.8" y="306.7" font-size="12.4" fill="#262626" textLength="824.6" lengthAdjust="spacingAndGlyphs" >1. Utiliza el Administrador de Escenarios para calcular la calificación final que se puede obtener si en el último examen la calificación es 7.5, 8, 8.5 y 9</text>
<rect x="92.5" y="328.6" width="343.5" height="18.5" fill="#e7e6e6" />
<text x="130.9" y="342.7" font-size="11.8" fill="#1a1a1a" font-weight="700" textLength="22.7" lengthAdjust="spacingAndGlyphs" >País</text>
<text x="191" y="342.7" font-size="11.8" fill="#1a1a1a" font-weight="700" textLength="119.4" lengthAdjust="spacingAndGlyphs" >% de calificación final</text>
<text x="315.8" y="342.7" font-size="11.8" fill="#1a1a1a" font-weight="700" textLength="117.7" lengthAdjust="spacingAndGlyphs" >Calificación obtenida</text>
<rect x="312.3" y="401.2" width="123.7" height="18.2" fill="#dde7f1" />
<line x1="92.5" y1="419.8" x2="436" y2="419.8" stroke="#1a1a1a" stroke-width="1.1" />
<text x="115.5" y="361.0" font-size="11.8" fill="#262626" textLength="53.2" lengthAdjust="spacingAndGlyphs" >Examen 1</text>
<text x="239.4" y="361.0" font-size="11.8" fill="#262626" textLength="22.6" lengthAdjust="spacingAndGlyphs" >12%</text>
<text x="366" y="361.0" font-size="11.8" fill="#262626" textLength="16.3" lengthAdjust="spacingAndGlyphs" >6.3</text>
<text x="115.5" y="379.16" font-size="11.8" fill="#262626" textLength="53.2" lengthAdjust="spacingAndGlyphs" >Examen 2</text>
<text x="239.4" y="379.16" font-size="11.8" fill="#262626" textLength="22.6" lengthAdjust="spacingAndGlyphs" >33%</text>
<text x="366" y="379.16" font-size="11.8" fill="#262626" textLength="16.3" lengthAdjust="spacingAndGlyphs" >7.2</text>
<text x="115.5" y="397.32" font-size="11.8" fill="#262626" textLength="53.2" lengthAdjust="spacingAndGlyphs" >Examen 3</text>
<text x="239.4" y="397.32" font-size="11.8" fill="#262626" textLength="22.6" lengthAdjust="spacingAndGlyphs" >13%</text>
<text x="366" y="397.32" font-size="11.8" fill="#262626" textLength="16.3" lengthAdjust="spacingAndGlyphs" >9.7</text>
<text x="115.5" y="415.48" font-size="11.8" fill="#262626" textLength="53.2" lengthAdjust="spacingAndGlyphs" >Examen 4</text>
<text x="239.4" y="415.48" font-size="11.8" fill="#262626" textLength="22.6" lengthAdjust="spacingAndGlyphs" >42%</text>
<text x="366" y="415.48" font-size="11.8" fill="#262626" textLength="16.3" lengthAdjust="spacingAndGlyphs" >7.5</text>
<text x="96.2" y="433.64" font-size="11.8" fill="#1a1a1a" font-weight="700" textLength="90.8" lengthAdjust="spacingAndGlyphs" >Calificación final</text>
<text x="237.4" y="433.64" font-size="11.8" fill="#262626" textLength="27.6" lengthAdjust="spacingAndGlyphs" >100%</text>
<text x="366" y="433.64" font-size="11.8" fill="#262626" textLength="16.3" lengthAdjust="spacingAndGlyphs" >7.5</text>
<rect x="312.3" y="455.9" width="123.3" height="18.9" fill="none" stroke="#1e6b45" stroke-width="2" />
<rect x="432.8" y="471.8" width="5" height="5" fill="#1e6b45" stroke="#ffffff" stroke-width="0.8" />
<defs><filter id="sh" x="-10%" y="-10%" width="130%" height="130%"><feGaussianBlur stdDeviation="3"/></filter></defs>
<rect x="700" y="528" width="214" height="328" fill="#000000" opacity="0.22" filter="url(#sh)"/>
<rect x="700" y="525.5" width="205.5" height="326" fill="#fafafa" stroke="#6e6e6e" stroke-width="1.4" />
<path d="M877 535 L889 544 M889 535 L877 544" fill="none" stroke="#222" stroke-width="1.3" />
<rect x="700" y="729.8" width="199.3" height="16.4" fill="#fdfdfd" stroke="#bfbfbf" stroke-width="1" />
<rect x="700" y="749.7" width="199.3" height="63.5" fill="#fdfdfd" stroke="#bfbfbf" stroke-width="1" />
<rect x="700" y="824.4" width="198" height="19.3" fill="#e1e1e1" stroke="#cfcfcf" stroke-width="1" />
<rect x="482" y="514" width="403" height="349" fill="#000000" opacity="0.2" filter="url(#sh)"/>
<line x1="486" y1="862.3" x2="884" y2="862.3" stroke="#8c8c8c" stroke-width="2.4" />
<line x1="884.2" y1="516" x2="884.2" y2="863" stroke="#8e8e8e" stroke-width="1.8" />
<rect x="479.8" y="511.6" width="403.2" height="349.4" fill="#ffffff" stroke="#d6d6d6" stroke-width="1" />
<rect x="482.3" y="669.6" width="397.5" height="21.2" fill="#e8e8e8" />
<text x="516.6" y="529.8" font-size="12" fill="#262626" textLength="181.6" lengthAdjust="spacingAndGlyphs" >Abrir enlace en una pestaña nueva</text>
<text x="516.6" y="551.8" font-size="12" fill="#262626" textLength="181.6" lengthAdjust="spacingAndGlyphs" >Abrir enlace en una ventana nueva</text>
<text x="516.6" y="573.7" font-size="12" fill="#262626" textLength="229" lengthAdjust="spacingAndGlyphs" >Abrir el enlace en una ventana de incógnito</text>
<text x="516.6" y="603" font-size="12" fill="#262626" textLength="180.8" lengthAdjust="spacingAndGlyphs" >Crear código QR para esta imagen</text>
<text x="516.6" y="634" font-size="12" fill="#262626" textLength="121" lengthAdjust="spacingAndGlyphs" >Guardar enlace como...</text>
<text x="516.6" y="655.8" font-size="12" fill="#262626" textLength="139" lengthAdjust="spacingAndGlyphs" >Copiar dirección de enlace</text>
<text x="516.6" y="684.7" font-size="12" fill="#262626" textLength="187" lengthAdjust="spacingAndGlyphs" >Abrir imagen en una pestaña nueva</text>
<text x="516.6" y="706.6" font-size="12" fill="#262626" textLength="126.5" lengthAdjust="spacingAndGlyphs" >Guardar imagen como...</text>
<text x="516.6" y="728.6" font-size="12" fill="#262626" textLength="76.6" lengthAdjust="spacingAndGlyphs" >Copiar imagen</text>
<text x="516.6" y="750.8" font-size="12" fill="#262626" textLength="145" lengthAdjust="spacingAndGlyphs" >Copiar dirección de imagen</text>
<text x="516.6" y="773" font-size="12" fill="#262626" textLength="141" lengthAdjust="spacingAndGlyphs" >Buscar imagen con Google</text>
<text x="516.6" y="801.7" font-size="12" fill="#262626" textLength="341" lengthAdjust="spacingAndGlyphs" >Adobe Acrobat: herramientas para convertir, editar y firmar PDFs</text>
<text x="516.6" y="823.4" font-size="12" fill="#262626" textLength="100.2" lengthAdjust="spacingAndGlyphs" >Descargar con IDM</text>
<text x="516.6" y="852.5" font-size="12" fill="#262626" textLength="65.5" lengthAdjust="spacingAndGlyphs" >Inspeccionar</text>
<line x1="483" y1="583.3" x2="879.5" y2="583.3" stroke="#e3e3e3" stroke-width="1" />
<line x1="483" y1="614.4" x2="879.5" y2="614.4" stroke="#e3e3e3" stroke-width="1" />
<line x1="483" y1="665.5" x2="879.5" y2="665.5" stroke="#e3e3e3" stroke-width="1" />
<line x1="483" y1="782.5" x2="879.5" y2="782.5" stroke="#e3e3e3" stroke-width="1" />
<line x1="483" y1="833.4" x2="879.5" y2="833.4" stroke="#e3e3e3" stroke-width="1" />
<path d="M489.6 596.5 V593.5 A2.5 2.5 0 0 1 492.1 591 H496 M498.2 591 H502.5 A2.5 2.5 0 0 1 505 593.5 V596.5 M505 601.5 V604.3 A2.5 2.5 0 0 1 502.5 606.8 H498.2 M496 606.8 H492.1 A2.5 2.5 0 0 1 489.6 604.3 V601.5" fill="none" stroke="#4a4a4a" stroke-width="1.3" />
<rect x="492.1" y="593.9" width="3.9" height="4" fill="#4a4a4a" rx="0.5" />
<rect x="498.1" y="593.9" width="3.9" height="4" fill="#4a4a4a" rx="0.5" />
<rect x="492.1" y="600" width="3.9" height="4" fill="#4a4a4a" rx="0.5" />
<rect x="498.1" y="600" width="3.9" height="4" fill="#4a4a4a" rx="0.5" />
<rect x="489" y="789" width="15.8" height="15.8" fill="#b00d0d" rx="2" />
<path d="M497 791 C497.8 792.5 497.5 795 496.8 796.5 L492.3 802 M496.8 796.5 C498.5 798.5 500.5 799.5 502.8 799.3 M496.8 796.5 C495 797.5 494 799 493.5 800" fill="none" stroke="#f6d0d0" stroke-width="1.4" stroke-linecap="round"/>
<circle cx="498.8" cy="818.3" r="6.3" fill="#3a78b8"/>
<path d="M493 815.5 C495 811.5 501 811 504 814.5 C501.5 815.5 498.5 817.5 496.5 820.5 Z" fill="#9fcf6a" />
<path d="M491 820 C493 818 497 818 499.5 821 L503.5 818.5 L500 825.5 L496.5 823.5 C495 822 493 821 491 822 Z" fill="#2f9a2a" />
<path d="M868.2 793.2 V801 L872.8 797.1 Z" fill="#555" />
<path d="M507 737.3 C515 734.5 525 733.2 545 733.3 L605 733.5 C630 734 645 736 660 738 C668 739 673 739 674.5 740.5 C675.5 745 676 750 674 754 C671 757.5 666 758 655 758 L605 758 C580 758.5 555 760 535 761.8 C520 762.5 510 761.5 504 759 C498 757 497 752 497 747 C497.5 742.5 500 739 507 737.3 Z" fill="none" stroke="#cc1830" stroke-width="2.5" stroke-linejoin="round"/>
<path d="M1039 845 L1053.5 828.5 Q1055.5 826 1053 823.5 L1035.5 806 Q1033 803.5 1030.5 806 L1008 829.5 Q1005.5 832.5 1008 835 L1031 858.5 Q1033.5 861 1036 858.5 L1044 850.5" fill="none" stroke="#eff2e4" stroke-width="9.5" stroke-linejoin="round" stroke-linecap="round"/>
<text x="1073" y="851.8" font-size="50" fill="#e9e9e9" textLength="130" lengthAdjust="spacingAndGlyphs" stroke="#e9e9e9" stroke-width="1.3" stroke-linejoin="round">Platzi</text>
<defs><linearGradient id="bs" x1="0" y1="0" x2="0" y2="1"><stop offset="0" stop-color="#ffffff" stop-opacity="0"/><stop offset="1" stop-color="#e8e8e8"/></linearGradient></defs>
<rect x="72" y="864" width="1117" height="12" fill="url(#bs)" />
</svg></body></html>
